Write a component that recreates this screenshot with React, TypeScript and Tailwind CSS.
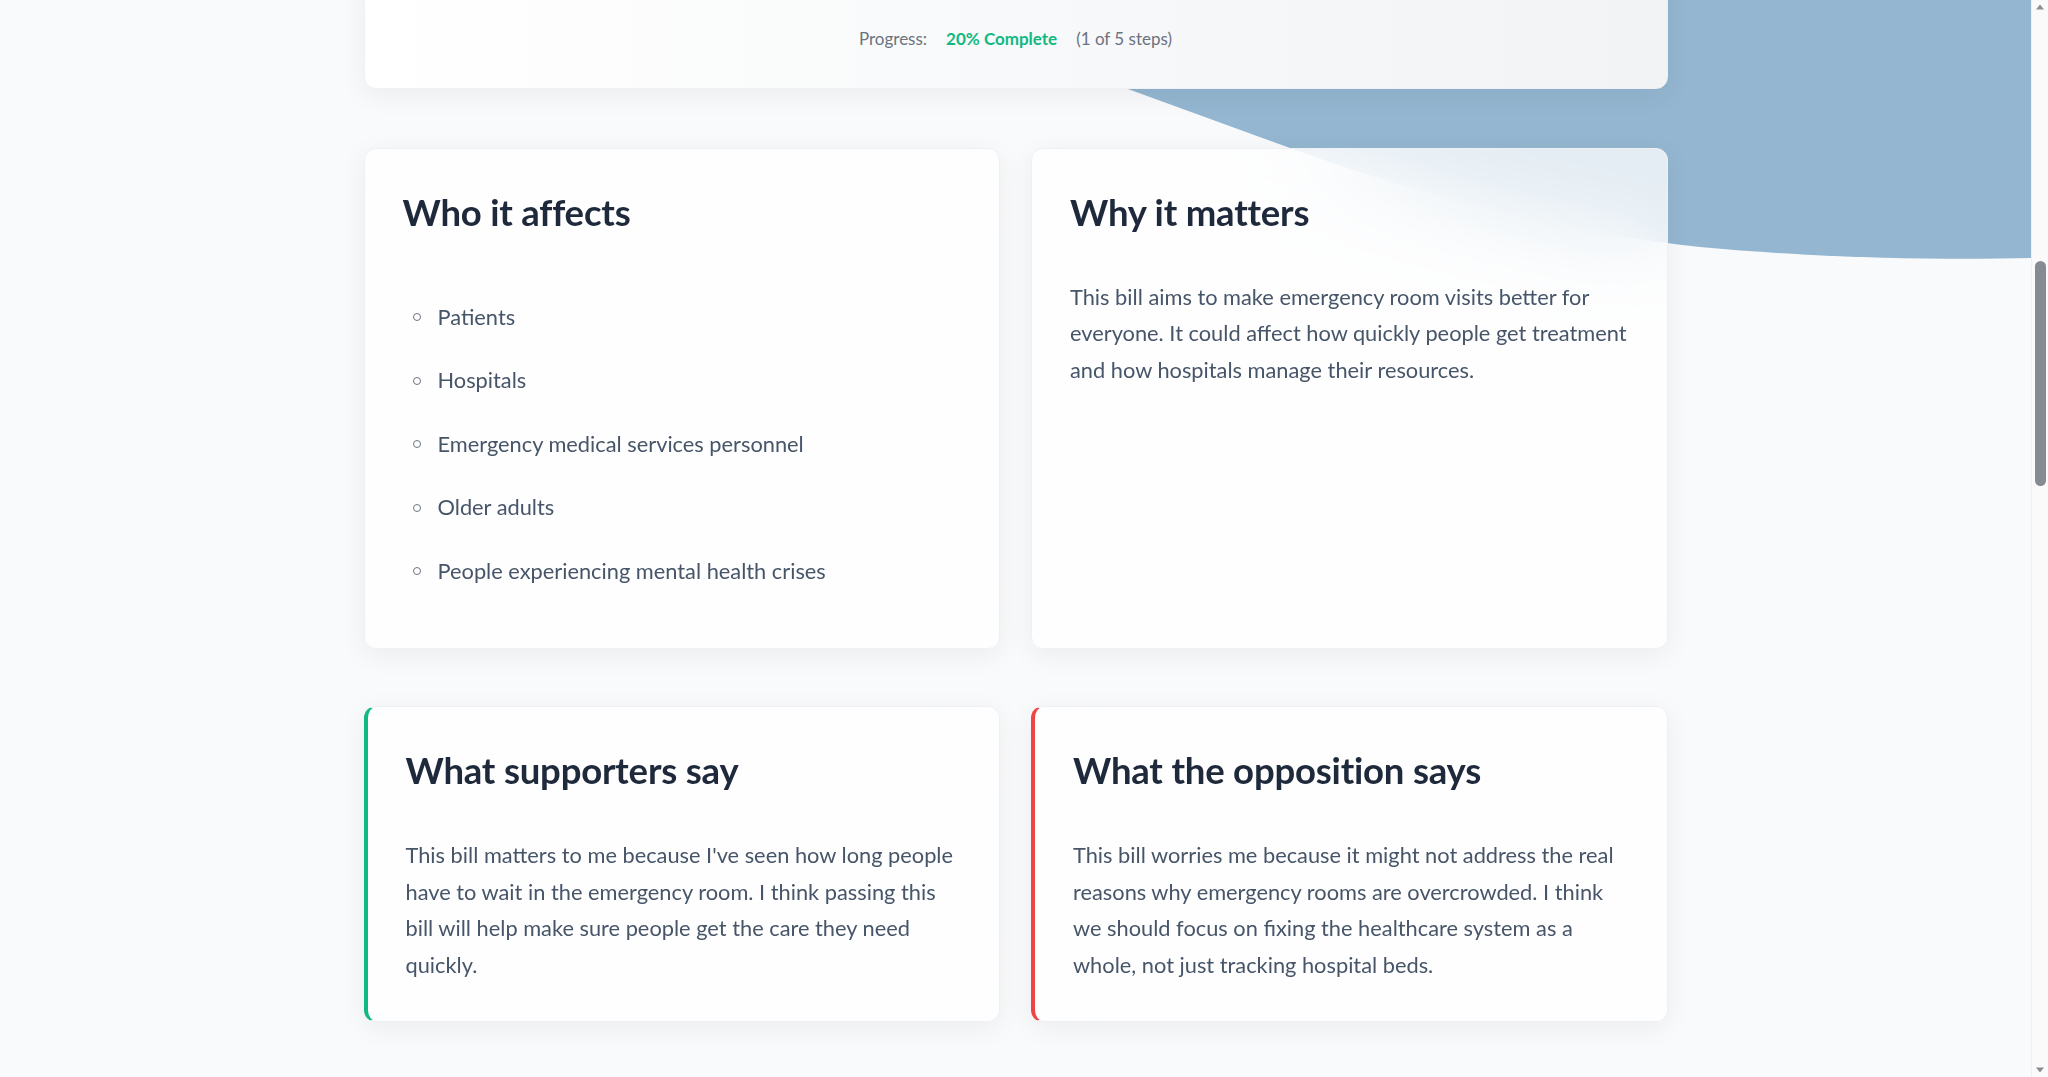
const affected = [
  "Patients",
  "Hospitals",
  "Emergency medical services personnel",
  "Older adults",
  "People experiencing mental health crises",
];

const whyLines = [
  "This bill aims to make emergency room visits better for",
  "everyone. It could affect how quickly people get treatment",
  "and how hospitals manage their resources.",
];

const supportLines = [
  "This bill matters to me because I've seen how long people",
  "have to wait in the emergency room. I think passing this",
  "bill will help make sure people get the care they need",
  "quickly.",
];

const opposeLines = [
  "This bill worries me because it might not address the real",
  "reasons why emergency rooms are overcrowded. I think",
  "we should focus on fixing the healthcare system as a",
  "whole, not just tracking hospital beds.",
];

function HeroBlob() {
  // bottom of the hero wave, sits behind the cards
  return (
    <svg
      className="pointer-events-none absolute right-0 top-0"
      width={1231}
      height={263}
      viewBox="800 0 1231 263"
      aria-hidden
    >
      <path
        d="M 2031 0 L 883 0 L 1290 148 C 1420 195 1560 232 1700 247 C 1830 259 1950 260 2031 258 Z"
        fill="#94b6d0"
      />
    </svg>
  );
}

function Scrollbar() {
  return (
    <div className="flex h-screen w-[17px] shrink-0 flex-col items-center border-l border-[#f0f0f0] bg-[#fafafa]">
      <svg width="10" height="17" viewBox="0 0 10 17" className="shrink-0">
        <path d="M1 9.5 L5 4.5 L9 9.5 Z" fill="#8a8d93" />
      </svg>
      <div className="mt-[244px] h-[225px] w-[11px] rounded-full bg-[#868a92]" />
      <div className="flex-1" />
      <svg width="10" height="17" viewBox="0 0 10 17" className="shrink-0">
        <path d="M1 7.5 L5 12.5 L9 7.5 Z" fill="#8a8d93" />
      </svg>
    </div>
  );
}

function Paragraph({ lines }: { lines: string[] }) {
  return (
    <p className="mt-[44px] text-[21.8px] leading-[36.6px]">
      {lines.map((line, i) => (
        <span key={i}>
          {line}
          {i < lines.length - 1 ? <br /> : null}
        </span>
      ))}
    </p>
  );
}

function InfoCard({
  title,
  accent,
  children,
}: {
  title: string;
  accent?: "green" | "red";
  children: React.ReactNode;
}) {
  return (
    <div
      className={[
        "rounded-xl border border-[#eef0f3] bg-white/75 backdrop-blur-2xl shadow-[0_6px_28px_rgba(15,23,42,0.06)] pt-[42px] pb-[37.5px] pl-[38px] pr-[28px]",
        accent === "green" ? "border-l-4 border-l-[#10b981]" : "",
        accent === "red" ? "border-l-4 border-l-[#ef4444]" : "",
      ].join(" ")}
    >
      <h2 className="text-[36.5px] leading-[1.2] font-bold text-[#1e293b] tracking-[-0.2px]">{title}</h2>
      {children}
    </div>
  );
}

export default function App() {
  return (
    <div className="flex h-screen overflow-hidden bg-[#f9fafb] font-[Lato,'Noto_Sans',sans-serif] text-[#475569]">
      <div className="relative flex-1 overflow-hidden">
        <HeroBlob />

        <main className="relative mx-auto w-[1304px]">
          <div className="-mt-[31px] rounded-xl border border-[#eef0f3] bg-gradient-to-r from-white via-[#f8f9fa] to-[#f2f3f5] pt-[56px] pb-[37px] shadow-[0_6px_28px_rgba(15,23,42,0.06)]">
            <div className="flex items-center justify-center gap-[19px] text-[17px] leading-[25px]">
              <span className="text-[#6b7280]">Progress:</span>
              <span className="font-bold text-[#10b981]">20% Complete</span>
              <span className="text-[#6b7280]">(1 of 5 steps)</span>
            </div>
          </div>

          <div className="mt-[59px] grid grid-cols-2 gap-[31px]">
            <InfoCard title="Who it affects">
              <ul className="mt-[64px] mb-[21px] flex flex-col gap-[26.9px] text-[21.8px] leading-[36.6px]">
                {affected.map((item) => (
                  <li key={item} className="flex items-center">
                    <span className="ml-[10.5px] mr-[16.5px] h-[8px] w-[8px] shrink-0 rounded-full border-[1.5px] border-[#6b7280]" />
                    <span>{item}</span>
                  </li>
                ))}
              </ul>
            </InfoCard>
            <InfoCard title="Why it matters">
              <Paragraph lines={whyLines} />
            </InfoCard>
          </div>

          <div className="mt-[57.5px] grid grid-cols-2 gap-[31px]">
            <InfoCard title="What supporters say" accent="green">
              <Paragraph lines={supportLines} />
            </InfoCard>
            <InfoCard title="What the opposition says" accent="red">
              <Paragraph lines={opposeLines} />
            </InfoCard>
          </div>
        </main>
      </div>
      <Scrollbar />
    </div>
  );
}
